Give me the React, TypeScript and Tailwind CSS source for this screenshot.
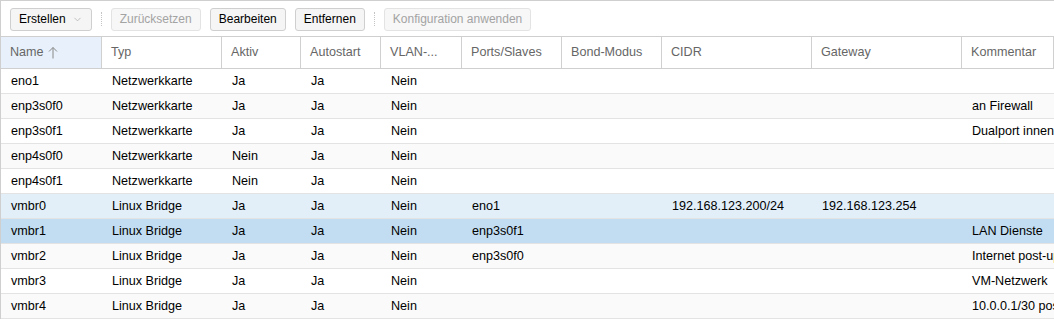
import { ChevronDown } from "lucide-react";

const cols = "grid grid-cols-[101px_120px_79px_80px_81px_100px_100px_150px_150px_minmax(0,1fr)]";

const headers = ["Name", "Typ", "Aktiv", "Autostart", "VLAN-...", "Ports/Slaves", "Bond-Modus", "CIDR", "Gateway", "Kommentar"];

const rows = [
  ["eno1", "Netzwerkkarte", "Ja", "Ja", "Nein", "", "", "", "", ""],
  ["enp3s0f0", "Netzwerkkarte", "Ja", "Ja", "Nein", "", "", "", "", "an Firewall"],
  ["enp3s0f1", "Netzwerkkarte", "Ja", "Ja", "Nein", "", "", "", "", "Dualport innen"],
  ["enp4s0f0", "Netzwerkkarte", "Nein", "Ja", "Nein", "", "", "", "", ""],
  ["enp4s0f1", "Netzwerkkarte", "Nein", "Ja", "Nein", "", "", "", "", ""],
  ["vmbr0", "Linux Bridge", "Ja", "Ja", "Nein", "eno1", "", "192.168.123.200/24", "192.168.123.254", ""],
  ["vmbr1", "Linux Bridge", "Ja", "Ja", "Nein", "enp3s0f1", "", "", "", "LAN Dienste"],
  ["vmbr2", "Linux Bridge", "Ja", "Ja", "Nein", "enp3s0f0", "", "", "", "Internet post-up"],
  ["vmbr3", "Linux Bridge", "Ja", "Ja", "Nein", "", "", "", "", "VM-Netzwerk"],
  ["vmbr4", "Linux Bridge", "Ja", "Ja", "Nein", "", "", "", "", "10.0.0.1/30 post-up"],
];

function Btn({ label, disabled, menu }: { label: string; disabled?: boolean; menu?: boolean }) {
  return (
    <div
      className={
        "h-[23px] flex items-center gap-[6px] px-[8px] rounded-[3px] border text-[12px] " +
        (disabled ? "border-[#e3e3e3] bg-[#f7f7f7] text-[#a3a3a3]" : "border-[#cfcfcf] bg-[#f5f5f5] text-[#000]")
      }
    >
      <span>{label}</span>
      {menu && <ChevronDown size={11} strokeWidth={1.5} className="text-[#a8a8a8]" />}
    </div>
  );
}

function Sep() {
  return <div className="w-px h-[14px] border-l border-dotted border-[#c4c4c4]" />;
}

export default function App() {
  return (
    <div className="w-[1054px] h-[319px] overflow-hidden bg-white border-t border-l border-[#cfcfcf] font-['Liberation_Sans',Arial,sans-serif]">
      <div className="h-[35px] flex items-center gap-[9px] pl-[9px] pt-[1px]">
        <Btn label="Erstellen" menu />
        <Sep />
        <Btn label="Zurücksetzen" disabled />
        <Btn label="Bearbeiten" />
        <Btn label="Entfernen" />
        <Sep />
        <Btn label="Konfiguration anwenden" disabled />
      </div>
      <div className={cols + " h-[33px] border-y border-[#cfcfcf] text-[12.6px] text-[#666]"}>
        {headers.map((h, i) => (
          <div
            key={h}
            className={
              "flex items-center pl-[9px] border-r border-[#d0d0d0] whitespace-nowrap overflow-hidden " +
              (i === 0 ? "bg-[#e8f1fb]" : "")
            }
          >
            {h}
            {i === 0 && (
              <svg width="10" height="13" viewBox="0 0 10 13" className="ml-[4px]" fill="none" stroke="#888" strokeWidth="1">
                <path d="M5 1.5V12.5M1 5.5L5 1.5L9 5.5" />
              </svg>
            )}
          </div>
        ))}
      </div>
      {rows.map((r, idx) => {
        let bg = idx % 2 === 1 ? "bg-[#fafafa]" : "bg-white";
        if (idx === 5) bg = "bg-[#e2eff9]";
        if (idx === 6) bg = "bg-[#c2ddf2]";
        return (
          <div key={r[0]} className={cols + " h-[25px] border-b border-[#e3e3e3] text-[12.6px] text-[#000] " + bg}>
            {r.map((c, j) => (
              <div key={j} className="flex items-center pl-[10px] whitespace-nowrap overflow-hidden">
                {c}
              </div>
            ))}
          </div>
        );
      })}
    </div>
  );
}
